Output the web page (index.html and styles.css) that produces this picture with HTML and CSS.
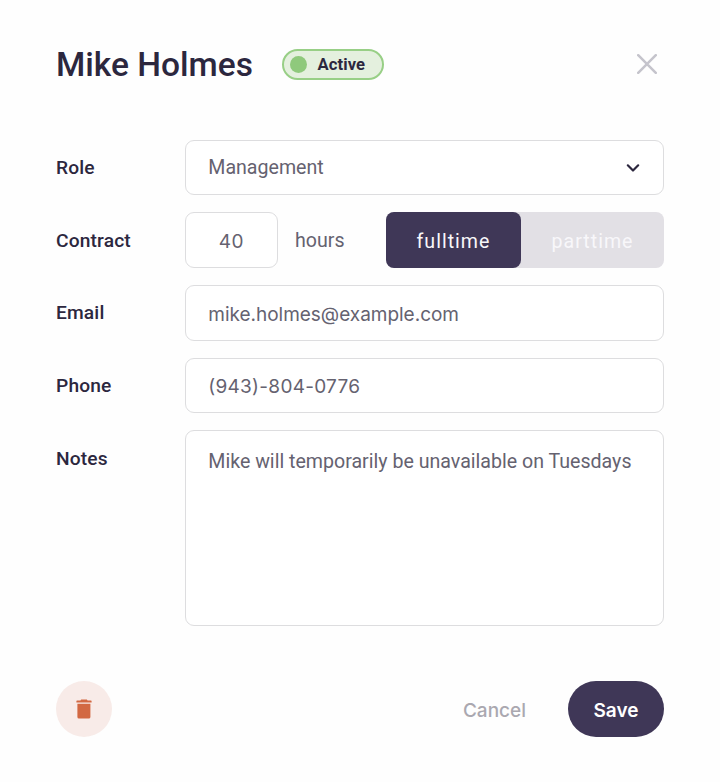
FILE: index.html
```html
<!DOCTYPE html>
<html lang="en">
<head>
<meta charset="utf-8">
<title>Mike Holmes</title>
<link rel="stylesheet" href="styles.css">
</head>
<body>
<main class="dialog">
  <header class="header">
    <h1 class="title">Mike Holmes</h1>
    <span class="badge"><span class="dot"></span><span class="badge-text">Active</span></span>
    <svg class="close" viewBox="0 0 20 20"><path d="M1.2 1.2 18.8 18.8M18.8 1.2 1.2 18.8"/></svg>
  </header>
  <section class="form">
    <div class="row">
      <span class="label">Role</span>
      <div class="field"><span class="management">Management</span>
        <svg class="chevron" viewBox="0 0 14 10"><path d="M1.8 2.3 7 7.5l5.2-5.2"/></svg>
      </div>
    </div>
    <div class="row">
      <span class="label">Contract</span>
      <div class="contract-controls">
        <div class="field amount"><span class="inter count">40</span></div>
        <span class="hours">hours</span>
        <div class="toggle"><div class="option selected"><span>fulltime</span></div><div class="option"><span>parttime</span></div></div>
      </div>
    </div>
    <div class="row">
      <span class="label">Email</span>
      <div class="field"><span class="inter email">mike.holmes@example.com</span></div>
    </div>
    <div class="row">
      <span class="label">Phone</span>
      <div class="field"><span class="inter phone">(943)-804-0776</span></div>
    </div>
    <div class="row notes-row">
      <span class="label notes-label">Notes</span>
      <div class="field notes"><span>Mike will temporarily be unavailable on Tuesdays</span></div>
    </div>
  </section>
  <footer class="footer">
    <div class="delete"><svg class="trash" viewBox="0 0 16 20"><path d="M5.2.5h5.6l.8 1.1H15a.6.6 0 0 1 .6.6v1.4H.4V2.2a.6.6 0 0 1 .6-.6h3.4zM1.4 4.7h13v13.2a1.6 1.6 0 0 1-1.6 1.6H3a1.6 1.6 0 0 1-1.6-1.6z"/></svg></div>
    <span class="cancel">Cancel</span>
    <div class="save"><span>Save</span></div>
  </footer>
</main>
</body>
</html>
```

FILE: styles.css
```css
* { box-sizing: border-box; }
body {
  margin: 0;
  background: #fefefe;
  font-family: Roboto, "Liberation Sans", sans-serif;
  color: #2c273e;
}
.dialog { height: 782px; padding: 44px 56px 0; overflow: hidden; }
.header { display: flex; align-items: center; height: 40px; }
.title { margin: 0; padding-top: 2px; font-size: 33.5px; font-weight: 500; line-height: 40px; white-space: nowrap; width: 225.5px; }
.badge {
  display: flex;
  align-items: center;
  width: 102.5px;
  height: 31px;
  padding-left: 6px;
  border: 2px solid #98cf86;
  border-radius: 16px;
  background: #e4f0de;
}
.dot { width: 17px; height: 17px; border-radius: 50%; background: #8fc97c; }
.badge-text { padding-top: 1px; margin-left: 11px; font-size: 16.6px; font-weight: 700; line-height: 20px; letter-spacing: .1px; }
.close { width: 20px; height: 20px; margin-left: auto; margin-right: 7px; fill: none; stroke: #c5c4cc; stroke-width: 2.5; stroke-linecap: round; }
.form { margin-top: 55.7px; display: flex; flex-direction: column; gap: 17px; }
.row { display: flex; height: 55.7px; align-items: center; }
.label { flex: none; width: 128.7px; padding-top: 1px; font-size: 19.2px; font-weight: 500; line-height: 24px; letter-spacing: .15px; }
.field {
  display: flex;
  flex: 1;
  align-items: center;
  height: 100%;
  padding: 0 23px 0 22.6px;
  border: 1.5px solid #dddddf;
  border-radius: 9px;
  background: #fff;
  color: #656270;
  font-size: 19.6px;
  line-height: 24px;
  white-space: nowrap;
}
.management { padding-top: 1px; }
.inter { font-family: Inter, sans-serif; font-size: 19px; padding-top: 4px; }
.count { letter-spacing: .5px; padding-top: 3px; }
.email { letter-spacing: -.02px; }
.phone { padding-top: 3px; letter-spacing: .28px; }
.chevron { width: 14px; height: 10px; margin-left: auto; fill: none; stroke: #2c273e; stroke-width: 2.2; stroke-linecap: round; stroke-linejoin: round; }
.contract-controls { display: flex; flex: 1; height: 100%; align-items: center; }
.amount { flex: none; width: 93.3px; padding: 0; justify-content: center; }
.hours { margin-left: 17px; padding-top: 2px; font-size: 19.6px; line-height: 24px; color: #656270; }
.toggle { display: flex; width: 278px; height: 100%; margin-left: auto; background: #e2e0e5; border-radius: 8px; }
.option { display: flex; flex: 1; align-items: center; justify-content: center; padding-top: 2px; color: #f8f7fa; font-size: 19.6px; letter-spacing: 1px; }
.selected { flex: none; width: 135px; background: #3f3757; border-radius: 8px; }
.notes-row { height: 195.3px; align-items: flex-start; }
.notes-label { margin-top: 15.5px; }
.notes { align-items: flex-start; padding-top: 19px; }
.footer { display: flex; align-items: center; height: 56px; margin-top: 55.5px; }
.delete { display: flex; align-items: center; justify-content: center; width: 56px; height: 56px; border-radius: 50%; background: #f8ebe8; }
.trash { width: 16px; height: 20px; fill: #d26842; }
.cancel { margin-left: auto; margin-right: 42px; padding-top: 3px; font: 500 19px/24px Inter, sans-serif; color: #aaa8b0; }
.save { display: flex; align-items: center; justify-content: center; width: 96px; height: 56px; padding-top: 3px; border-radius: 28px; background: #3f3757; color: #fff; font: 600 19px/24px Inter, sans-serif; }
```
